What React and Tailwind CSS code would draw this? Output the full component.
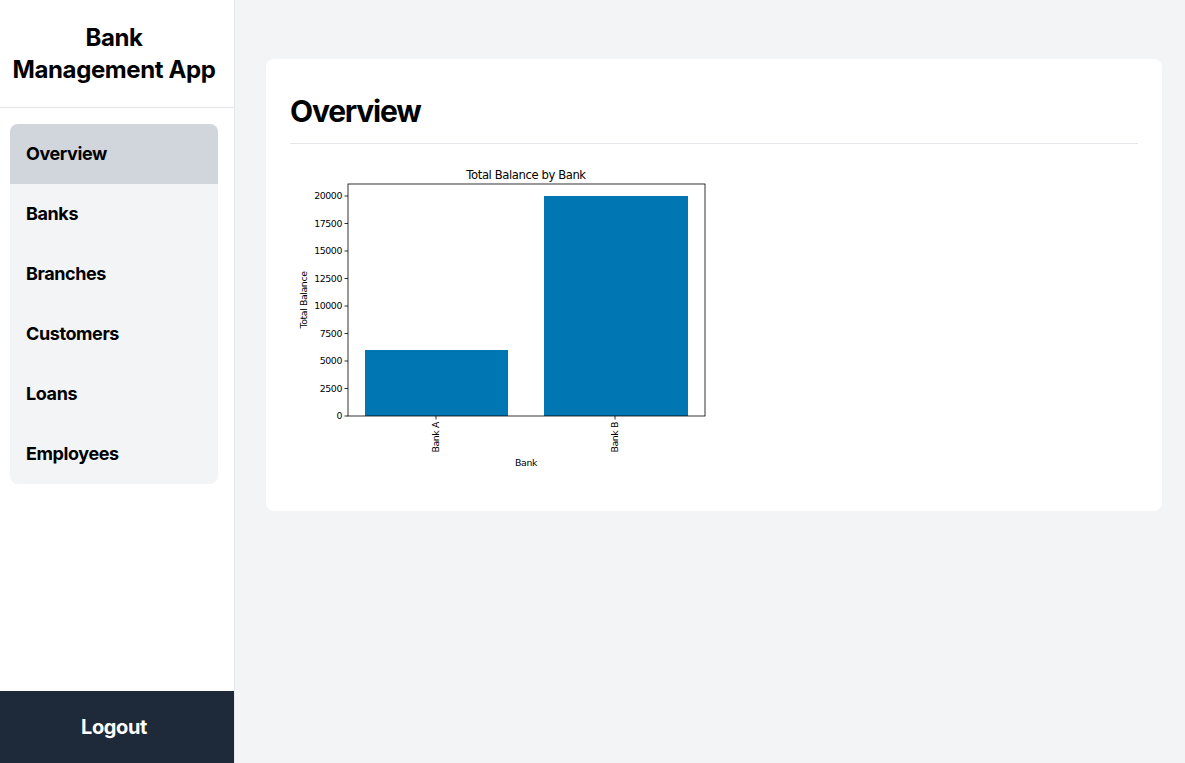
import React from 'react';

const nav = ['Overview', 'Banks', 'Branches', 'Customers', 'Loans', 'Employees'];

const ticks = [0, 2500, 5000, 7500, 10000, 12500, 15000, 17500, 20000];

// chart drawn in local coords: origin = page (290,160)
const BalanceChart = () => {
  const ox = 58; // axis left
  const oy = 256; // axis bottom
  const top = 24;
  const right = 415;
  const y = (v) => oy - (v / 20000) * 220;
  return (
    <svg width="430" height="315" viewBox="0 0 430 315" style={{ fontFamily: '"DejaVu Sans", sans-serif' }}>
      <text x="236" y="19" fontSize="11.6" textAnchor="middle" fill="#000">Total Balance by Bank</text>
      <rect x="75" y={y(6000)} width="143" height={oy - y(6000)} fill="#0077b3" />
      <rect x="254" y={y(20000)} width="144" height={oy - y(20000)} fill="#0077b3" />
      <rect x={ox} y={top} width={right - ox} height={oy - top} fill="none" stroke="#000" strokeWidth="0.8" />
      {ticks.map((t) => (
        <g key={t}>
          <line x1={ox - 3.5} x2={ox} y1={y(t)} y2={y(t)} stroke="#000" strokeWidth="0.8" />
          <text x={ox - 6} y={y(t) + 3.4} fontSize="9.4" textAnchor="end" fill="#000">{t}</text>
        </g>
      ))}
      {[['Bank A', 146], ['Bank B', 325]].map(([l, x]) => (
        <g key={l}>
          <line x1={x} x2={x} y1={oy} y2={oy + 3.5} stroke="#000" strokeWidth="0.8" />
          <text x={x + 3.4} y={oy + 6} fontSize="9.4" textAnchor="end" fill="#000" transform={`rotate(-90 ${x + 3.4} ${oy + 6})`}>{l}</text>
        </g>
      ))}
      <text x="236" y="306" fontSize="9.4" textAnchor="middle" fill="#000">Bank</text>
      <text x="17" y="140" fontSize="9.4" textAnchor="middle" fill="#000" transform="rotate(-90 17 140)">Total Balance</text>
    </svg>
  );
};

const App = () => {
  return (
    <div className="flex h-[763px] w-full bg-gray-100 font-['Inter',sans-serif] tracking-tight text-black">
      <aside className="flex w-[235px] shrink-0 flex-col border-r border-gray-200 bg-white">
        <div className="flex h-[108px] items-center justify-center border-b border-gray-200 pr-[6px] text-center">
          <h1 className="text-2xl font-bold leading-8">Bank<br />Management App</h1>
        </div>
        <nav className="ml-[10px] mr-4 mt-4 overflow-hidden rounded-lg bg-gray-100">
          {nav.map((item, i) => (
            <div
              key={item}
              className={`flex h-[60px] items-center px-4 text-lg font-bold ${i === 0 ? 'bg-gray-300' : ''}`}
            >
              {item}
            </div>
          ))}
        </nav>
        <div className="mt-auto flex h-[72px] items-center justify-center bg-gray-800 pr-[6px] text-xl font-bold text-white">
          Logout
        </div>
      </aside>

      <main className="flex-1 pl-[31px] pr-[23px] pt-[59px]">
        <div className="rounded-lg bg-white px-6 pb-9 pt-[34px]">
          <h2 className="border-b border-gray-200 pb-[14px] text-3xl font-bold leading-9 tracking-[-0.04em]">Overview</h2>
          <div className="pt-4">
            <BalanceChart />
          </div>
        </div>
      </main>
    </div>
  );
};

export default App;
